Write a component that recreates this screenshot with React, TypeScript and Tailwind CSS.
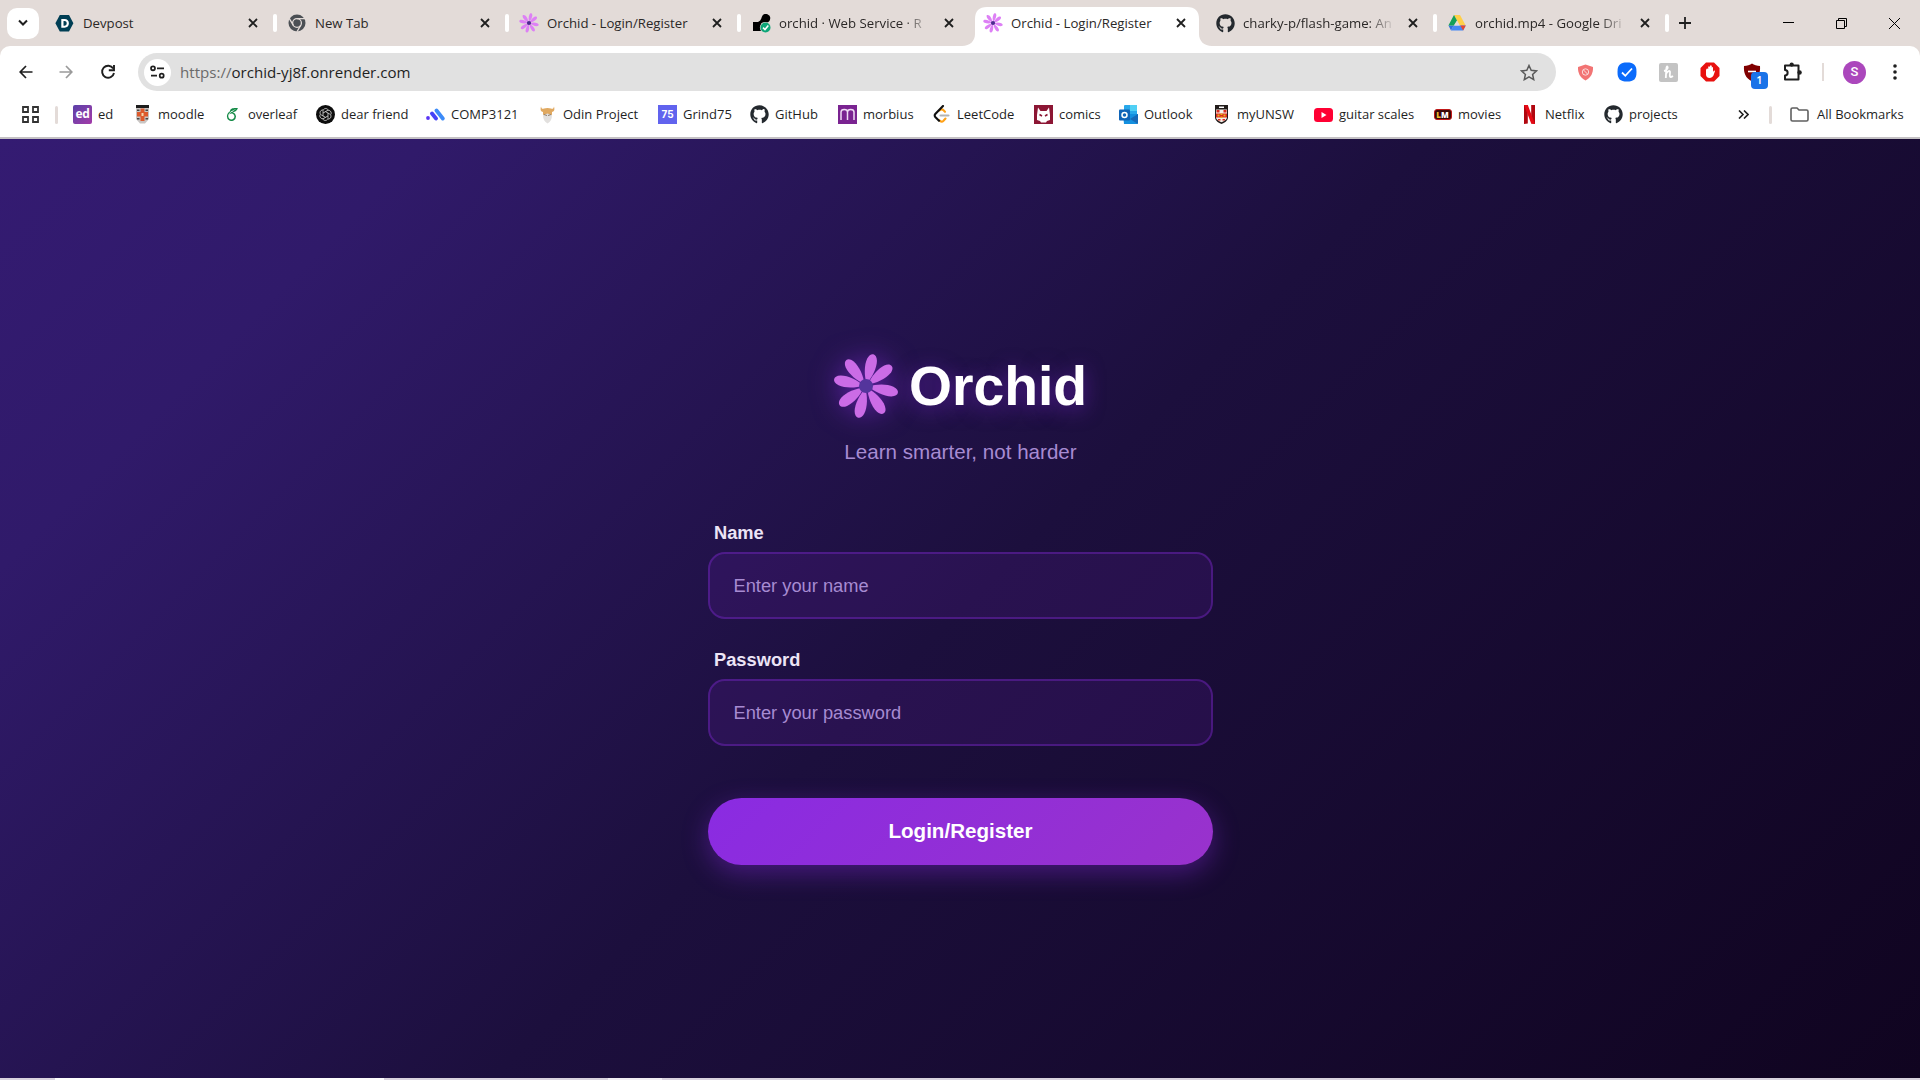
import { ReactNode } from "react";
import { FaGithub } from "react-icons/fa";
import { SiOverleaf } from "react-icons/si";

const PETALS = [13, 52, 102, 147, 194, 234, 282, 323];

function Flower({ size, petal, core, glow }: { size: number; petal: string; core: string; glow?: boolean }) {
  return (
    <svg
      width={size}
      height={size}
      viewBox="-33 -33 66 66"
      className={glow ? "overflow-visible drop-shadow-[0_0_13px_rgba(138,43,226,0.6)]" : ""}
    >
      {PETALS.map((a) => (
        <path
          key={a}
          d="M0 -3C-4 -9 -6.6 -20 -5 -27C-4 -31 -2 -32.6 0 -32.6C2 -32.6 4 -31 5 -27C6.6 -20 4 -9 0 -3Z"
          fill={petal}
          transform={`rotate(${a})`}
        />
      ))}
      <circle r="7" fill={core} />
    </svg>
  );
}

function SmallFlower() {
  return <Flower size={20} petal="#dd80f5" core="#4b2a8f" />;
}

function DevpostIcon() {
  return (
    <svg width="19" height="19" viewBox="0 0 19 19" className="mr-[2px] shrink-0">
      <path d="M4.8 1H14L18.4 9.3L14 17.6H4.8L0.4 9.3Z" fill="#003e54" />
      <path
        d="M6.3 5h3.2c2.8 0 4.4 1.7 4.4 4.3s-1.6 4.4-4.4 4.4H6.3Z M8.5 7v4.7h1c1.4 0 2.2-.9 2.2-2.4S10.9 7 9.5 7Z"
        fill="#fff"
        fillRule="evenodd"
      />
    </svg>
  );
}

function ChromeIcon() {
  return (
    <svg width="18" height="18" viewBox="0 0 18 18">
      <circle cx="9" cy="9" r="8.5" fill="#4b4f54" />
      <g stroke="#e3dbd8" strokeWidth="1.3" fill="none">
        <circle cx="9" cy="9" r="4.4" />
        <path d="M9 4.6H17M5.2 11.2L1.2 4.3M12.8 11.2L8.8 18" />
      </g>
    </svg>
  );
}

function RenderIcon() {
  return (
    <svg width="19" height="19" viewBox="0 0 19 19">
      <path d="M10 2.5A4.300 4.300 0 1 1 13 8.500L9.500 9V17H1V8H5C8 8 9 5.500 10 2.500Z" fill="#000" />
      <circle cx="13.5" cy="13.5" r="5.6" fill="#e3dbd8" />
      <circle cx="13.5" cy="13.5" r="5" fill="#0da678" />
      <path d="M11 13.6l2 2 3.3-4" stroke="#fff" strokeWidth="1.5" fill="none" />
    </svg>
  );
}

function DriveIcon() {
  return (
    <svg width="18" height="18" viewBox="0 0 18 18">
      <path d="M6 1h6l5.7 10.5h-5.9L6 1Z" fill="#ffcf48" />
      <path d="M3 16.5l2.6-5h12.2l-2.7 5Z" fill="#4688f4" />
      <path d="M0.500 11.500H5.600L3 16.500Z" fill="#2f6fe0" />
      <path d="M6 1L9 6.5L5.8 11.500H0.400Z" fill="#14a05a" />
      <path d="M12.3 11.5h5.400l-2.600 5Z" fill="#e8452f" />
      <path d="M9 6.7l2.700 4.800H6.300Z" fill="#e3dbd8" />
    </svg>
  );
}

function CloseX() {
  return (
    <svg width="10" height="10" viewBox="0 0 10 10" className="shrink-0">
      <path d="M1 1L9 9M9 1L1 9" stroke="#1f1f1f" strokeWidth="1.8" />
    </svg>
  );
}

interface TabItem {
  title: string;
  icon: ReactNode;
  active?: boolean;
  fade?: boolean;
  divider?: boolean;
}

const tabs: TabItem[] = [
  { title: "Devpost", icon: <DevpostIcon />, divider: true },
  { title: "New Tab", icon: <ChromeIcon />, divider: true },
  { title: "Orchid - Login/Register", icon: <SmallFlower />, divider: true },
  { title: "orchid · Web Service · R", icon: <RenderIcon />, fade: true },
  { title: "Orchid - Login/Register", icon: <SmallFlower />, active: true },
  { title: "charky-p/flash-game: An", icon: <FaGithub size={19} color="#24292e" />, fade: true, divider: true },
  { title: "orchid.mp4 - Google Dri", icon: <DriveIcon />, fade: true, divider: true },
];

function Tab({ tab }: { tab: TabItem }) {
  return (
    <div className="relative h-[46px] w-[232px] shrink-0">
      {tab.active && (
        <svg width="250" height="39" viewBox="0 0 250 39" className="absolute bottom-0 left-[-13px]">
          <path d="M0 39C8 39 13 34 13 27V12C13 4 17 0 25 0H225C233 0 237 4 237 12V27C237 34 242 39 250 39Z" fill="#fff" />
        </svg>
      )}
      <div className="relative flex h-full items-center pl-[8px]">
        <span className="flex w-[20px] shrink-0 justify-center">{tab.icon}</span>
        <span
          className={`ml-[8px] w-[152px] whitespace-nowrap pt-[2px] text-[13.2px] text-[#2b2827] ${
            tab.fade ? "[mask-image:linear-gradient(to_right,#000_82%,transparent_100%)]" : ""
          }`}
        >
          {tab.title}
        </span>
        <span className="ml-[13px] flex">
          <CloseX />
        </span>
        {tab.divider && <span className="ml-auto mr-[2px] h-[18px] w-[4px] rounded-sm bg-white" />}
      </div>
    </div>
  );
}

function TabStrip() {
  return (
    <div className="flex h-[46px] items-center bg-[#e3dbd8]">
      <button className="ml-[7px] flex h-[31px] w-[32px] items-center justify-center rounded-[10px] bg-white">
        <svg width="10" height="8" viewBox="0 0 10 8">
          <path d="M1 1.5L5 5.5L9 1.5" stroke="#1f1f1f" strokeWidth="2" fill="none" />
        </svg>
      </button>
      <div className="ml-[8px] flex">
        {tabs.map((tab, i) => (
          <Tab key={i} tab={tab} />
        ))}
      </div>
      <svg width="12" height="12" viewBox="0 0 12 12" className="ml-[8px]">
        <path d="M6 0V12M0 6H12" stroke="#1f1f1f" strokeWidth="1.8" />
      </svg>
      <div className="ml-auto mr-[20px] flex items-center gap-[42px]">
        <svg width="11" height="11" viewBox="0 0 11 11">
          <path d="M0 4.5H11" stroke="#000" />
        </svg>
        <svg width="11" height="11" viewBox="0 0 11 11">
          <path d="M0.5 2.5H8.5V10.5H0.5ZM2.5 2.5V0.5H10.5V8.5H8.5" stroke="#000" fill="none" />
        </svg>
        <svg width="11" height="11" viewBox="0 0 11 11">
          <path d="M0 0L11 11M11 0L0 11" stroke="#000" strokeWidth="1" />
        </svg>
      </div>
    </div>
  );
}

function Extensions() {
  return (
    <div className="flex items-center">
      <svg width="17" height="17" viewBox="0 0 17 17" className="ml-[21px]">
        <path d="M8.5 0.5L16 3C16.3 9 14 13.5 8.5 16.5C3 13.5 0.7 9 1 3Z" fill="#f27474" />
        <circle cx="8.5" cy="8" r="3.2" fill="none" stroke="#fbdcdc" strokeWidth="1" />
        <path d="M6.500 6l4 4" stroke="#fbdcdc" strokeWidth="1" />
      </svg>
      <svg width="20" height="20" viewBox="0 0 20 20" className="ml-[23px]">
        <path d="M10 0.5C17 0.5 19.5 3 19.5 10S17 19.5 10 19.5S0.5 17 0.5 10S3 0.5 10 0.5Z" fill="#0b6bfb" />
        <path d="M5 10.5l3.3 3.3L15 6.5" stroke="#fff" strokeWidth="1.8" fill="none" />
      </svg>
      <svg width="19" height="19" viewBox="0 0 19 19" className="ml-[22px]">
        <rect width="19" height="19" rx="2" fill="#c3c3c3" />
        <path
          d="M5 8C8 7.500 9.500 4 8.300 3.500C7 3.200 7.300 9 6.800 15M7 11C8.5 7.500 11.500 7 11 10C10.600 13 10.500 15.500 14 13"
          stroke="#fff"
          strokeWidth="1.8"
          fill="none"
        />
      </svg>
      <svg width="20" height="20" viewBox="0 0 20 20" className="ml-[22px]">
        <path d="M6 0.5H14L19.5 6V14L14 19.5H6L0.5 14V6Z" fill="#e8110f" />
        <path
          d="M6 8V13C6.5 17 13 17 14 12L15 9C14.5 8 13.5 8.5 13 10V5.5C12.5 4.5 11.8 5 11.8 6V4C11.3 3 10.2 3 10 4V5C9.5 4 8.3 4.2 8.2 5V7C7.5 6 6.3 6.5 6 8Z"
          fill="#fff"
        />
      </svg>
      <div className="relative ml-[23px] h-[19px] w-[18px]">
        <svg width="18" height="19" viewBox="0 0 18 19">
          <path d="M9 0.5C11 2 14 3 17 3C17.5 10 15.5 15 9 18.5C2.5 15 0.5 10 1 3C4 3 7 2 9 0.5Z" fill="#800000" />
          <path d="M5 8.500H13" stroke="#fff" strokeWidth="1.6" />
        </svg>
        <span className="absolute left-[8px] top-[9px] flex h-[17px] w-[17px] items-center justify-center rounded-[4px] bg-[#1a73e8] text-[11px] font-semibold text-white">
          1
        </span>
      </div>
      <svg width="20" height="20" viewBox="0 0 20 20" className="ml-[22px]">
        <path
          d="M2 3.5H15.5V17.5H2V13.5C5.5 13.5 5.5 8 2 8Z"
          stroke="#1f1f1f"
          strokeWidth="2"
          fill="none"
          strokeLinejoin="round"
        />
        <circle cx="8.7" cy="2.6" r="2.1" fill="#1f1f1f" />
        <circle cx="16.6" cy="10.5" r="2.2" fill="#1f1f1f" />
      </svg>
      <span className="ml-[19px] h-[18px] w-[2px] bg-[#e3dbd8]" />
      <span className="ml-[19px] flex h-[23px] w-[23px] items-center justify-center rounded-full bg-[#ab47bc] font-['Roboto'] text-[13px] font-medium text-white">
        S
      </span>
      <svg width="4" height="16" viewBox="0 0 4 16" className="ml-[27px]">
        <circle cx="2" cy="2" r="1.8" fill="#1f1f1f" />
        <circle cx="2" cy="8" r="1.8" fill="#1f1f1f" />
        <circle cx="2" cy="14" r="1.8" fill="#1f1f1f" />
      </svg>
    </div>
  );
}

function Toolbar() {
  return (
    <div className="flex h-[52px] items-center rounded-t-[10px] bg-white">
      <svg width="14" height="14" viewBox="0 0 14 14" className="ml-[19px]">
        <path d="M13.5 7H1.5M7 1L1.2 7L7 13" stroke="#1f1f1f" strokeWidth="1.7" fill="none" />
      </svg>
      <svg width="14" height="14" viewBox="0 0 14 14" className="ml-[26px]">
        <path d="M0.5 7H12.5M7 1L12.8 7L7 13" stroke="#9a9a9a" strokeWidth="1.7" fill="none" />
      </svg>
      <svg width="16" height="16" viewBox="0 0 16 16" className="ml-[27px]">
        <path d="M13.2 4.5A6 6 0 1 0 14 9" stroke="#1f1f1f" strokeWidth="1.9" fill="none" />
        <path d="M14 1V6.2H8.8" stroke="#1f1f1f" strokeWidth="1.9" fill="none" />
      </svg>
      <div className="ml-[22px] flex h-[38px] w-[1418px] items-center rounded-full bg-[#e1e1e1]">
        <span className="ml-[6px] flex h-[27px] w-[27px] items-center justify-center rounded-full bg-white">
          <svg width="15" height="14" viewBox="0 0 15 14" fill="none" stroke="#1f1f1f" strokeWidth="1.7">
            <circle cx="3" cy="3.3" r="2" />
            <path d="M7 3.3H14M1 10.7H7" />
            <circle cx="11.7" cy="10.7" r="2" />
          </svg>
        </span>
        <span className="ml-[9px] whitespace-nowrap pt-px text-[15.1px] text-[#1f1f1f]">
          <span className="text-[#6b6b6b]">https://</span>orchid-yj8f.onrender.com
        </span>
        <svg width="18" height="17" viewBox="0 0 18 17" className="ml-auto mr-[18px]">
          <path
            d="M9 1.5L11.2 6.3L16.5 6.9L12.6 10.4L13.7 15.6L9 12.9L4.3 15.6L5.4 10.4L1.5 6.9L6.8 6.3Z"
            stroke="#5a5a5a"
            strokeWidth="1.5"
            fill="none"
          />
        </svg>
      </div>
      <Extensions />
    </div>
  );
}

function MoodleIcon() {
  return (
    <svg width="13" height="19" viewBox="0 0 13 19">
      <path d="M0 0H13V3H0Z" fill="#1c1c1c" />
      <path d="M0 3H13V14L9 18.500H4L0 14Z" fill="#c9c5c3" />
      <path d="M4.500 3.500H8.500V16H4.500Z M1 7H12V11.500H1Z" fill="#dd5a2c" />
      <path d="M5.500 8H7.500V11H5.500Z" fill="#f3d9b0" />
      <path d="M1 4.500H3.500V6H1ZM9.500 4.500H12V6H9.500ZM1 13H3.500V14.500H1ZM9.500 13H12V14.500H9.500Z" fill="#4a4644" />
    </svg>
  );
}

function UnswIcon() {
  return (
    <svg width="13" height="19" viewBox="0 0 13 19">
      <path d="M0 0H13V13C12.5 16 9.5 18 6.5 19C3.5 18 0.5 16 0 13Z" fill="#221c1a" />
      <path d="M4 1.500H9V3H4Z" fill="#fff" />
      <path d="M1 4.500H12V13C11 15 9 16.5 6.5 17.3C4 16.5 2 15 1 13Z" fill="#f4efe9" />
      <path d="M1.500 5H4.500V7.500H1.500ZM8.500 5H11.500V7.500H8.500ZM1 8.500H12V12.500H1ZM3 14H5.500V15.500H3ZM7.500 14H10V15.500H7.500Z" fill="#d8281c" />
      <path d="M2.500 9.500H4.500V11.500H2.500ZM5.500 8.500H7.500V10H5.500ZM8.500 9.500H10.500V11.500H8.500ZM5.500 11.500H7.500V13H5.500Z" fill="#e9b41c" />
    </svg>
  );
}

function DearFriendIcon() {
  return (
    <svg width="19" height="19" viewBox="0 0 19 19">
      <circle cx="9.5" cy="9.5" r="9.5" fill="#0d0d0d" />
      <g fill="none" stroke="#d5d5d5" strokeWidth="0.8">
        {[0, 60, 120, 180, 240, 300].map((a) => (
          <path key={a} d="M7 10.9V6.2C7 3.2 11 2.6 12.2 5" transform={`rotate(${a} 9.5 9.5)`} />
        ))}
      </g>
    </svg>
  );
}

function CompIcon() {
  return (
    <svg width="19" height="13" viewBox="0 0 19 13" strokeLinecap="round">
      <circle cx="2" cy="10" r="1.9" fill="#5a35f5" />
      <path d="M6 5.5L10 10.5" stroke="#4543f7" strokeWidth="3.8" />
      <path d="M10.5 2.5L16.8 10.5" stroke="#3d8bf8" strokeWidth="3.8" />
    </svg>
  );
}

function OdinIcon() {
  return (
    <svg width="15" height="18" viewBox="0 0 15 18">
      <path d="M1 0.5C1.500 3 2.500 3 4 2.500C6 1.800 9 1.800 11 2.500C12.500 3 13.500 3 14 0.500C15 4 14 5.500 12 6V9H3V6C1 5.500 0 4 1 0.500Z" fill="#e0a961" />
      <path d="M3 9L7.5 7.500L12 9C12 13 10.5 16 7.5 17.5C4.5 16 3 13 3 9Z" fill="#e2e0de" />
      <path d="M4 8.500L7 9.500M11 8.500L8 9.500" stroke="#8e7d6c" strokeWidth="1" />
    </svg>
  );
}

function OutlookIcon() {
  return (
    <svg width="19" height="19" viewBox="0 0 19 19">
      <rect x="5" y="0" width="13" height="11" rx="1" fill="#28a8ea" />
      <rect x="11" y="0" width="7" height="6" fill="#50d0f5" />
      <path d="M4 9H19V17.5C19 18.3 18.5 19 17.5 19H5Z" fill="#1490df" />
      <path d="M19 9L11 14L19 19Z" fill="#1769b8" />
      <rect y="4.5" width="11" height="11" rx="1" fill="#0f64b8" />
      <circle cx="5.5" cy="10" r="2.5" fill="none" stroke="#fff" strokeWidth="1.5" />
    </svg>
  );
}

function ComicsIcon() {
  return (
    <svg width="19" height="19" viewBox="0 0 19 19">
      <rect width="19" height="19" fill="#8c1634" />
      <path d="M4 2.5L6.5 6H12.5L15 2.5L16 10V15L13 16L12 17.5H7L6 16L3 15V10Z" fill="#fff" />
      <path d="M5.5 9.5L8 11M13.5 9.5L11 11" stroke="#8c1634" strokeWidth="1.5" />
    </svg>
  );
}

function YoutubeIcon() {
  return (
    <svg width="19" height="14" viewBox="0 0 19 14">
      <rect width="19" height="14" rx="3.5" fill="#ff0033" />
      <path d="M7.5 4L12.5 7L7.5 10Z" fill="#fff" />
    </svg>
  );
}

function NetflixIcon() {
  return (
    <svg width="11" height="19" viewBox="0 0 11 19">
      <path d="M0 0H3.8V18.5L0 19ZM7.2 0H11V19L7.2 18.5Z" fill="#b1060f" />
      <path d="M0 0H3.8L11 19L7.2 18.5Z" fill="#e50914" />
    </svg>
  );
}

function MorbiusIcon() {
  return (
    <svg width="19" height="19" viewBox="0 0 19 19">
      <rect width="19" height="19" fill="#7a2391" />
      <path
        d="M3 15V7C3 3.5 9.5 3.5 9.5 7V15M9.5 7C9.5 3.5 16 3.5 16 7V15"
        stroke="#f0dcf5"
        strokeWidth="1.5"
        fill="none"
      />
    </svg>
  );
}

function LeetCodeIcon() {
  return (
    <svg width="17" height="19" viewBox="0 0 17 19" fill="none" strokeLinecap="round" strokeWidth="2.1">
      <path d="M12.5 13.5L10.5 15.8C9.5 16.8 8 16.8 7 15.8L6 15" stroke="#ffa116" />
      <path d="M6.5 5.3C8 4.2 9.5 4.3 10.5 5.3L12 6.8" stroke="#ffa116" />
      <path d="M10 1L2.3 9C1.5 10 1.5 11 2.3 12L6 15.8" stroke="#111" />
      <path d="M7.5 10.5H15.5" stroke="#b3b3b3" />
    </svg>
  );
}

interface Bookmark {
  label: string;
  icon: ReactNode;
  width: string;
}

const bookmarks: Bookmark[] = [
  {
    label: "ed",
    icon: (
      <span className="flex h-[19px] w-[19px] items-center justify-center rounded-[2px] bg-gradient-to-br from-[#5a3fa8] to-[#a339a8] pb-px text-[12px] font-bold tracking-[-0.3px] text-white">
        ed
      </span>
    ),
    width: "w-[60px]",
  },
  { label: "moodle", icon: <MoodleIcon />, width: "w-[90px]" },
  { label: "overleaf", icon: <SiOverleaf size={13} color="#138a46" />, width: "w-[93px]" },
  { label: "dear friend", icon: <DearFriendIcon />, width: "w-[110px]" },
  { label: "COMP3121", icon: <CompIcon />, width: "w-[112px]" },
  { label: "Odin Project", icon: <OdinIcon />, width: "w-[120px]" },
  {
    label: "Grind75",
    icon: (
      <span className="flex h-[19px] w-[19px] items-center justify-center bg-[#6163ee] font-['Inter'] text-[10px] font-bold text-white">
        75
      </span>
    ),
    width: "w-[92px]",
  },
  { label: "GitHub", icon: <FaGithub size={19} color="#24292e" />, width: "w-[88px]" },
  { label: "morbius", icon: <MorbiusIcon />, width: "w-[94px]" },
  { label: "LeetCode", icon: <LeetCodeIcon />, width: "w-[102px]" },
  { label: "comics", icon: <ComicsIcon />, width: "w-[85px]" },
  { label: "Outlook", icon: <OutlookIcon />, width: "w-[93px]" },
  { label: "myUNSW", icon: <UnswIcon />, width: "w-[102px]" },
  { label: "guitar scales", icon: <YoutubeIcon />, width: "w-[119px]" },
  {
    label: "movies",
    icon: (
      <span className="flex h-[11px] w-[18px] items-center justify-center rounded-[3px] border border-[#c01818] bg-[#3a0808] text-[8px] font-extrabold leading-none text-white">
        <span className="text-[#f0c030]">L</span>M
      </span>
    ),
    width: "w-[87px]",
  },
  { label: "Netflix", icon: <NetflixIcon />, width: "w-[84px]" },
  { label: "projects", icon: <FaGithub size={19} color="#24292e" />, width: "w-[90px]" },
];

function BookmarksBar() {
  return (
    <div className="flex h-[41px] items-center border-b-2 border-[#c4c1c4] bg-white pb-[6px] text-[13px] text-[#1f1f1f]">
      <svg width="17" height="17" viewBox="0 0 17 17" fill="none" stroke="#333" strokeWidth="1.8" className="ml-[22px]">
        <path d="M1 1H6V6H1ZM11 1H16V6H11ZM1 11H6V16H1ZM11 11H16V16H11Z" />
      </svg>
      <span className="ml-[16px] h-[18px] w-[3px] rounded bg-[#e3dbd8]" />
      <div className="ml-[15px] flex">
        {bookmarks.map((b) => (
          <div key={b.label} className={`flex shrink-0 items-center gap-[6px] whitespace-nowrap ${b.width}`}>
            <span className="flex h-[19px] w-[19px] shrink-0 items-center justify-center">{b.icon}</span>
            <span>{b.label}</span>
          </div>
        ))}
      </div>
      <div className="ml-auto mr-[15px] flex items-center">
        <svg width="11" height="9" viewBox="0 0 11 9" fill="none" stroke="#1f1f1f" strokeWidth="1.6">
          <path d="M1 0.5L5 4.5L1 8.5M6 0.5L10 4.5L6 8.5" />
        </svg>
        <span className="ml-[20px] h-[18px] w-[3px] rounded bg-[#e3dbd8]" />
        <svg width="19" height="15" viewBox="0 0 19 15" fill="none" stroke="#5f5f5f" strokeWidth="1.6" className="ml-[18px]">
          <path d="M1 2.5C1 1.5 1.5 1 2.5 1H7L9 3H16.5C17.5 3 18 3.5 18 4.5V12.5C18 13.5 17.5 14 16.5 14H2.5C1.5 14 1 13.5 1 12.5Z" />
        </svg>
        <span className="ml-[8px] w-[88px] whitespace-nowrap">All Bookmarks</span>
      </div>
    </div>
  );
}

interface FieldProps {
  label: string;
  type: string;
  placeholder: string;
}

function Field({ label, type, placeholder }: FieldProps) {
  return (
    <div className="flex flex-col">
      <label className="pl-[6.5px] text-[18.3px] font-bold leading-[21px] text-[#ece4f6]">{label}</label>
      <input
        type={type}
        placeholder={placeholder}
        className="mt-[9px] h-[67px] w-full rounded-[17px] border-2 border-[#8a2be2]/35 bg-[#8a2be2]/12 px-[24px] text-[18.3px] text-white placeholder:text-[#a78bd2] focus:outline-none"
      />
    </div>
  );
}

function LoginPage() {
  return (
    <main className="flex h-[939px] flex-col items-center bg-[linear-gradient(135deg,#341b72_0%,#301a6a_15%,#1c0f3d_50%,#100420_100%)] pt-[214px] font-['Liberation_Sans',sans-serif]">
      <div className="flex items-center">
        <Flower size={66} petal="#cb6ce6" core="#54359c" glow />
        <h1 className="ml-[10px] text-[55.3px] font-bold leading-[66px] text-white [text-shadow:0_4px_20px_rgba(138,43,226,0.5)]">
          Orchid
        </h1>
      </div>
      <p className="mt-[21px] pl-px text-[20.6px] leading-[24px] text-[#a78bd2]">Learn smarter, not harder</p>

      <form className="mt-[58px] flex w-[505px] flex-col gap-[30px]" onSubmit={(e) => e.preventDefault()}>
        <Field label="Name" type="text" placeholder="Enter your name" />
        <Field label="Password" type="password" placeholder="Enter your password" />
        <button className="mt-[22px] h-[67px] rounded-full bg-[linear-gradient(135deg,#8a2be2,#9932cc)] pl-px text-[20.6px] font-bold text-white shadow-[0_8px_26px_rgba(138,43,226,0.4)]">
          Login/Register
        </button>
      </form>
    </main>
  );
}

export default function App() {
  return (
    <div className="h-[1080px] w-[1920px] overflow-hidden bg-[#e3dbd8] font-['Open_Sans',sans-serif]">
      <TabStrip />
      <Toolbar />
      <BookmarksBar />
      <LoginPage />
      {/* top edge of the taskbar */}
      <div className="flex h-[2px] bg-[#d9d3de]">
        <span className="ml-[55px] h-full w-[329px] bg-white" />
        <span className="ml-[224px] h-full w-[54px] bg-[#f1eef3]" />
      </div>
    </div>
  );
}
